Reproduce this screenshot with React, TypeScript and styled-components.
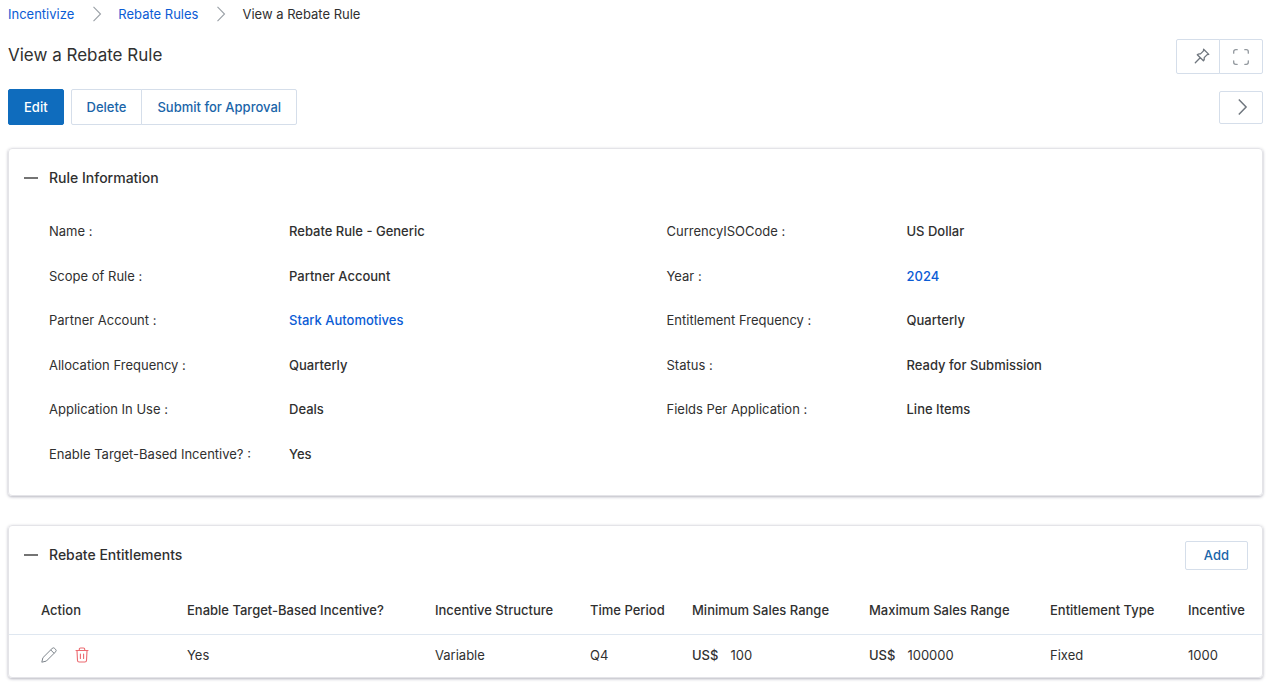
import React from "react";
import styled, { createGlobalStyle, css } from "styled-components";

const GlobalStyle = createGlobalStyle`
  *, *::before, *::after { box-sizing: border-box; }
  body {
    margin: 0;
    background: #fff;
    color: #303030;
    font-family: Inter, "Liberation Sans", sans-serif;
    font-size: 13px;
    line-height: 20px;
  }
  h1, h2, dl, dd, ol { margin: 0; padding: 0; }
  button { font-family: inherit; cursor: pointer; }
`;

const Page = styled.main`
  padding: 4px 6px 12px 8px;
`;

const Breadcrumb = styled.ol`
  display: flex;
  align-items: center;
  list-style: none;
`;

const Crumb = styled.li`
  display: flex;
  align-items: center;

  svg { margin: 0 16px 0 18px; }
`;

const TextLink = styled.a`
  color: #0b5cd5;
  text-decoration: none;
`;

const TitleBar = styled.header`
  display: flex;
  justify-content: space-between;
  align-items: flex-start;
  margin-top: 15px;
`;

const Title = styled.h1`
  font-size: 17px;
  line-height: 32px;
  font-weight: 400;
`;

const Toolbar = styled.div`
  display: flex;
  justify-content: space-between;
  align-items: center;
  margin: 15px 0 23px;
`;

const ButtonRow = styled.div`
  display: flex;
  gap: 7px;
`;

const ButtonGroup = styled.div`
  display: flex;

  button + button { margin-left: -1px; border-radius: 0 2px 2px 0; }
  button:first-child { border-radius: 2px 0 0 2px; }
`;

const Button = styled.button<{ $primary?: boolean; $small?: boolean }>`
  height: ${(p) => (p.$small ? 29 : 36)}px;
  padding: 0 ${(p) => (p.$small ? 18 : 15)}px;
  border: 1px solid #d5deea;
  border-radius: 2px;
  background: #fff;
  color: #1a65a9;
  font-size: 13px;
  font-weight: 500;
  ${(p) =>
    p.$primary &&
    css`
      border-color: #0f6cbd;
      background: #0f6cbd;
      color: #fff;
    `}
`;

const IconButton = styled.button<{ $short?: boolean; $muted?: boolean }>`
  display: flex;
  align-items: center;
  justify-content: center;
  width: 44px;
  height: ${(p) => (p.$short ? 33 : 35)}px;
  padding: 0;
  border: 1px solid #d5deea;
  border-radius: 2px;
  background: #fff;
  color: ${(p) => (p.$muted ? "#92989e" : "#6f767e")};
`;

const PinButton = styled(IconButton)`
  justify-content: flex-end;
  padding-right: 8px;
`;

const Card = styled.section`
  border: 1px solid #e4e4e8;
  border-radius: 4px;
  box-shadow: 0 1px 3px rgba(40, 40, 70, 0.35);

  & + & { margin-top: 29px; }
`;

const CardHeader = styled.div`
  display: flex;
  align-items: center;
  justify-content: space-between;
  height: 58px;
  padding: 0 14px 0 15px;
`;

const Toggle = styled.button`
  display: flex;
  align-items: center;
  gap: 11px;
  padding: 0;
  border: 0;
  background: none;
  color: inherit;
  font-size: 14px;
  line-height: 20px;
  font-weight: 500;
`;

const Dash = styled.span`
  width: 14px;
  height: 2px;
  background: #747474;
`;

const CardTitle = styled.h2`
  font-size: 14px;
  line-height: 20px;
  font-weight: 500;
`;

const Fields = styled.dl`
  display: grid;
  grid-template-columns: 1fr 1fr;
  grid-auto-rows: 1fr;
  column-gap: 22px;
  min-height: 267px;
  margin: 2px 0 19px;
  padding-left: 40px;
`;

const Field = styled.div`
  display: flex;
  align-items: center;

  dt { width: 240px; flex: none; }
  dd { font-weight: 500; }
`;

const Table = styled.table`
  width: 100%;
  table-layout: fixed;
  border-collapse: collapse;

  th, td {
    padding: 0 8px;
    text-align: left;
    white-space: nowrap;
  }
  th { height: 50px; padding-top: 2px; font-weight: 500; border-bottom: 1px solid #dfe7f0; }
  td { height: 43px; padding-bottom: 2px; }
  th:first-child, td:first-child { padding-left: 32px; }
`;

const Column = styled.col<{ $width: number }>`
  width: ${(p) => p.$width}px;
`;

const Actions = styled.div`
  display: flex;
  gap: 17px;
`;

const RowAction = styled.button<{ $danger?: boolean }>`
  display: flex;
  padding: 0;
  border: 0;
  background: none;
  color: ${(p) => (p.$danger ? "#ec6a70" : "#7d848b")};
`;

const Currency = styled.span`
  margin-right: 12px;
  font-weight: 500;
`;

const CrumbArrow = () => (
  <svg width="10" height="18" viewBox="0 0 10 18" fill="none" stroke="#9aa0a6" strokeWidth="1.1" aria-hidden="true">
    <path d="M1.500 1.800 8.500 9l-7 7.200" />
  </svg>
);

const PinIcon = () => (
  <svg width="18" height="18" viewBox="0 0 18 18" fill="none" stroke="currentColor" strokeWidth="1.300" strokeLinejoin="round" strokeLinecap="round" aria-hidden="true">
    <path d="m10.600 1.200 5.200 5.200-1.600.2-3 3c.3 1.300 0 2.400-.8 3.200L4.300 6.700c.8-.8 1.900-1.100 3.200-.8l3-3zM7.200 9.800 2.300 14.700" />
  </svg>
);

const ExpandIcon = () => (
  <svg width="18" height="18" viewBox="0 0 18 18" fill="none" stroke="currentColor" strokeWidth="1.300" strokeLinecap="round" aria-hidden="true">
    <path d="M1.700 5.200V3.700a2 2 0 0 1 2-2h1.500M12.800 1.700h1.500a2 2 0 0 1 2 2v1.500M16.300 12.800v1.500a2 2 0 0 1-2 2h-1.500M5.200 16.300H3.700a2 2 0 0 1-2-2v-1.500" />
  </svg>
);

const NextIcon = () => (
  <svg width="18" height="18" viewBox="0 0 18 18" fill="none" stroke="currentColor" strokeWidth="1.500" aria-hidden="true">
    <path d="m6.800 1.500 7.300 7.500-7.300 7.500" />
  </svg>
);

const PencilIcon = () => (
  <svg width="16" height="16" viewBox="0 0 16 16" fill="none" stroke="currentColor" strokeWidth="1" strokeLinejoin="round" aria-hidden="true">
    <path d="M.8 15.200 1.900 10.700 11.100 1.500a1.900 1.900 0 0 1 2.700 0l.7.7a1.900 1.900 0 0 1 0 2.700L5.300 14.100zM9.700 2.900l3.400 3.400" />
  </svg>
);

const TrashIcon = () => (
  <svg width="16" height="16" viewBox="0 0 16 16" fill="none" stroke="currentColor" strokeWidth="1.100" strokeLinecap="round" strokeLinejoin="round" aria-hidden="true">
    <path d="M2 3.500h12M5.300 3.300V2.200A1.200 1.200 0 0 1 6.500 1h3a1.200 1.200 0 0 1 1.200 1.200v1.100M3 3.700l.5 9.800A1.600 1.600 0 0 0 5.100 15h5.800a1.600 1.600 0 0 0 1.600-1.500l.5-9.800M6.400 7v4.500M9.600 7v4.500" />
  </svg>
);

const fields = [
  { label: "Name", value: "Rebate Rule - Generic" },
  { label: "CurrencyISOCode", value: "US Dollar" },
  { label: "Scope of Rule", value: "Partner Account" },
  { label: "Year", value: "2024", link: true },
  { label: "Partner Account", value: "Stark Automotives", link: true },
  { label: "Entitlement Frequency", value: "Quarterly" },
  { label: "Allocation Frequency", value: "Quarterly" },
  { label: "Status", value: "Ready for Submission" },
  { label: "Application In Use", value: "Deals" },
  { label: "Fields Per Application", value: "Line Items" },
  { label: "Enable Target-Based Incentive?", value: "Yes" },
];

const columns = [
  { title: "Action", width: 170 },
  { title: "Enable Target-Based Incentive?", width: 248 },
  { title: "Incentive Structure", width: 155 },
  { title: "Time Period", width: 102 },
  { title: "Minimum Sales Range", width: 177 },
  { title: "Maximum Sales Range", width: 181 },
  { title: "Entitlement Type", width: 138 },
  { title: "Incentive", width: 82 },
];

export default function App() {
  return (
    <>
      <GlobalStyle />
      <Page>
        <nav aria-label="Breadcrumb">
          <Breadcrumb>
            <Crumb><TextLink href="#incentivize">Incentivize</TextLink><CrumbArrow /></Crumb>
            <Crumb><TextLink href="#rules">Rebate Rules</TextLink><CrumbArrow /></Crumb>
            <Crumb aria-current="page">View a Rebate Rule</Crumb>
          </Breadcrumb>
        </nav>

        <TitleBar>
          <Title>View a Rebate Rule</Title>
          <ButtonGroup>
            <PinButton type="button" aria-label="Pin"><PinIcon /></PinButton>
            <IconButton type="button" aria-label="Full screen" $muted><ExpandIcon /></IconButton>
          </ButtonGroup>
        </TitleBar>

        <Toolbar>
          <ButtonRow>
            <Button type="button" $primary>Edit</Button>
            <ButtonGroup>
              <Button type="button">Delete</Button>
              <Button type="button">Submit for Approval</Button>
            </ButtonGroup>
          </ButtonRow>
          <IconButton type="button" aria-label="Next record" $short><NextIcon /></IconButton>
        </Toolbar>

        <Card>
          <CardHeader>
            <CardTitle><Toggle type="button" aria-expanded="true"><Dash />Rule Information</Toggle></CardTitle>
          </CardHeader>
          <Fields>
            {fields.map((f) => (
              <Field key={f.label}>
                <dt>{f.label} :</dt>
                <dd>{f.link ? <TextLink href="#record">{f.value}</TextLink> : f.value}</dd>
              </Field>
            ))}
          </Fields>
        </Card>

        <Card>
          <CardHeader>
            <CardTitle><Toggle type="button" aria-expanded="true"><Dash />Rebate Entitlements</Toggle></CardTitle>
            <Button type="button" $small>Add</Button>
          </CardHeader>
          <Table>
            <colgroup>
              {columns.map((c) => <Column key={c.title} $width={c.width} />)}
            </colgroup>
            <thead>
              <tr>{columns.map((c) => <th key={c.title} scope="col">{c.title}</th>)}</tr>
            </thead>
            <tbody>
              <tr>
                <td>
                  <Actions>
                    <RowAction type="button" aria-label="Edit entitlement"><PencilIcon /></RowAction>
                    <RowAction type="button" aria-label="Delete entitlement" $danger><TrashIcon /></RowAction>
                  </Actions>
                </td>
                <td>Yes</td>
                <td>Variable</td>
                <td>Q4</td>
                <td><Currency>US$</Currency>100</td>
                <td><Currency>US$</Currency>100000</td>
                <td>Fixed</td>
                <td>1000</td>
              </tr>
            </tbody>
          </Table>
        </Card>
      </Page>
    </>
  );
}
